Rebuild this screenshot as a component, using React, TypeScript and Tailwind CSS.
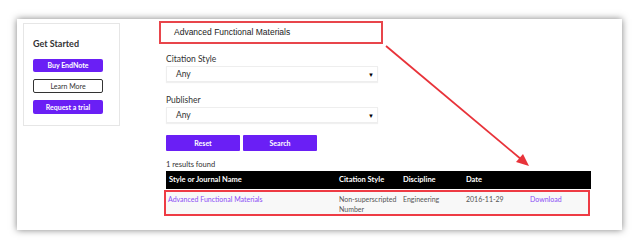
const App: React.FC = () => {
    const purple = "bg-[#6a1ff5]";

    return (
        <div className="relative h-[248px] w-[640px] overflow-hidden bg-white font-['Lato',sans-serif]">
            <div className="ml-[17px] mt-[19px] flex h-[211px] w-[605px] bg-white shadow-[0_0_7px_rgba(0,0,0,0.5)]">
                {/* sidebar */}
                <div className="ml-[6px] mt-[4px] h-[103px] w-[97px] border border-[#e6e6e6] bg-white px-[9px] pt-[14px]">
                    <h3 className="text-[9px] font-bold leading-[12px] text-[#333]">
                        Get Started
                    </h3>
                    <div className="mt-[9px] flex flex-col gap-[7px]">
                        <button className={`h-[13px] w-[70px] rounded-[2px] ${purple} text-[7px] font-bold leading-[13px] text-white`}>
                            Buy EndNote
                        </button>
                        <button className="h-[14px] w-[70px] rounded-[2px] border-[1.5px] border-[#333] bg-white text-[7px] leading-[11px] text-[#333]">
                            Learn More
                        </button>
                        <button className={`h-[14px] w-[70px] rounded-[2px] ${purple} text-[7px] font-bold leading-[14px] text-white`}>
                            Request a trial
                        </button>
                    </div>
                </div>

                {/* main */}
                <div className="ml-[46px] flex w-[425px] flex-col">
                    <div className="-ml-[7px] mt-[2px] flex h-[23px] w-[224px] items-center border-2 border-[#e8454b] bg-white pl-[13px]">
                        <span className="font-['Liberation_Sans',sans-serif] text-[8.5px] text-[#222]">
                            Advanced Functional Materials
                        </span>
                    </div>

                    <label className="mt-[10px] text-[8.5px] leading-[11px] text-[#333]">
                        Citation Style
                    </label>
                    <div className="mt-[1px] flex h-[16px] w-[212px] items-center justify-between border border-[#eee] bg-white pl-[9px] pr-[3px] shadow-[0_1px_1px_rgba(0,0,0,0.06)]">
                        <span className="text-[8.5px] text-[#333]">Any</span>
                        <span className="text-[6px] text-black">▼</span>
                    </div>

                    <label className="mt-[13px] text-[8.5px] leading-[11px] text-[#333]">
                        Publisher
                    </label>
                    <div className="mt-[1px] flex h-[16px] w-[212px] items-center justify-between border border-[#eee] bg-white pl-[9px] pr-[3px] shadow-[0_1px_1px_rgba(0,0,0,0.06)]">
                        <span className="text-[8.5px] text-[#333]">Any</span>
                        <span className="text-[6px] text-black">▼</span>
                    </div>

                    <div className="mt-[12px] flex gap-[3px]">
                        <button className={`h-[16px] w-[74px] rounded-[1px] ${purple} text-[7px] font-bold text-white`}>
                            Reset
                        </button>
                        <button className={`h-[16px] w-[74px] rounded-[1px] ${purple} text-[7px] font-bold text-white`}>
                            Search
                        </button>
                    </div>

                    <p className="mt-[9px] text-[7.5px] leading-[10px] text-[#333]">
                        1 results found
                    </p>

                    <div className="mt-[1px] flex h-[18px] w-[425px] items-center bg-black text-[7.5px] font-bold text-white">
                        <span className="w-[173px] pl-[3px]">Style or Journal Name</span>
                        <span className="w-[64px]">Citation Style</span>
                        <span className="w-[63px]">Discipline</span>
                        <span>Date</span>
                    </div>

                    <div className="-ml-[2px] mt-[1px] flex h-[26px] w-[426px] items-start border-2 border-[#ee3b44] bg-[#f8f8f8] pt-[2px] text-[7px] font-normal leading-[10px] text-[#555]">
                        <span className="w-[173px] pl-[2px] text-[#8a4df5]">
                            Advanced Functional Materials
                        </span>
                        <span className="w-[64px]">
                            Non-superscripted
                            <br />
                            Number
                        </span>
                        <span className="w-[63px]">Engineering</span>
                        <span className="w-[64px]">2016-11-29</span>
                        <span className="text-[#8a4df5]">Download</span>
                    </div>
                </div>
            </div>

            {/* annotation arrow */}
            <svg
                className="pointer-events-none absolute left-0 top-0"
                width="640"
                height="248"
                viewBox="0 0 640 248"
            >
                <line
                    x1="386"
                    y1="46"
                    x2="522"
                    y2="160"
                    stroke="#e8333a"
                    strokeWidth="1.8"
                />
                <polygon points="529,166 516,162 523,154" fill="#e8333a" />
            </svg>
        </div>
    );
};

export default App;
